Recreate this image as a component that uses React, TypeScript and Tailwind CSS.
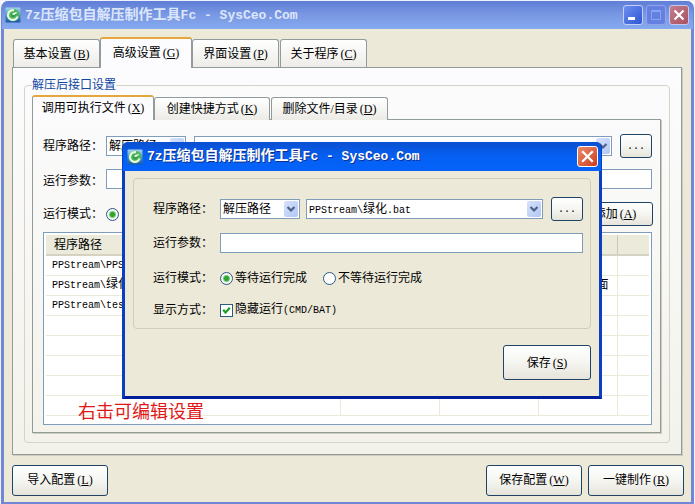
import type { ReactNode } from "react";
import clsx from "clsx";

const files = [
  { name: "PPStream\\PPStream", ext: ".exe", mode: "等待", display: "显示界面" },
  { name: "PPStream\\", cjk: "绿化", ext: ".bat", mode: "等待", display: "不显示界面" },
  { name: "PPStream\\test", ext: ".exe", mode: "等待", display: "显示界面" },
];
const emptyRows = [0, 1, 2, 3, 4];

function Hotkey({ children }: { children: string }) {
  return (
    <span className="ml-0.5">
      (<u>{children}</u>)
    </span>
  );
}

function Mono({ children }: { children: ReactNode }) {
  return <span className="font-['Liberation_Mono','Noto_Sans_CJK_SC',monospace] text-[10px]">{children}</span>;
}

function AppLogo() {
  return (
    <svg viewBox="0 0 16 16" className="h-4 w-4 shrink-0" aria-hidden="true">
      <defs>
        <linearGradient id="logoBg" x1="0" y1="0" x2="0" y2="1">
          <stop offset="0" stopColor="#a4d2ee" />
          <stop offset="0.5" stopColor="#4b9fc0" />
          <stop offset="1" stopColor="#1a56a4" />
        </linearGradient>
      </defs>
      <rect x="0.5" y="0.5" width="15" height="15" rx="1" fill="url(#logoBg)" />
      <circle cx="8" cy="8" r="6.300" fill="#4db55a" />
      <path d="M12.600 9.500A4.900 4.900 0 1 1 9 3.200" fill="none" stroke="#e8f8e2" strokeWidth="2.200" />
      <path d="M6 9C6 6 8.500 4.800 12 5.500C11 6.500 11 9.800 8 10.500Z" fill="#2f9d4a" />
      <path d="M7 7.500C8 5.500 10 5 12.500 5.500C11 6.300 10.500 7.500 9 8Z" fill="#f2fbe9" />
    </svg>
  );
}

function TitleText() {
  return (
    <h1 className="whitespace-pre font-['Liberation_Mono','Noto_Sans_CJK_SC',monospace] text-[13px] leading-5 font-bold">
      7z<span className="text-[14px]">压缩包自解压制作工具</span>Fc - SysCeo.Com
    </h1>
  );
}

function Tab({ label, hotkey, active, className }: { label: string; hotkey: string; active?: boolean; className: string }) {
  return (
    <button
      type="button"
      role="tab"
      aria-selected={!!active}
      className={clsx(
        "whitespace-nowrap rounded-t-[3px] border border-b-0 border-[#919b9c]",
        active
          ? "relative border-t-2 border-t-[#e5a63c] bg-[#fcfcfe] pb-0.5"
          : "bg-linear-to-b from-white to-[#ecebe6]",
        className,
      )}
    >
      {label}
      <Hotkey>{hotkey}</Hotkey>
    </button>
  );
}

function PushButton({ children, className, label }: { children: ReactNode; className: string; label?: string }) {
  return (
    <button
      type="button"
      aria-label={label}
      className={clsx(
        "shrink-0 whitespace-nowrap rounded-[3px] border border-[#1f4468] bg-linear-to-b from-white via-[#f5f5f1] to-[#e6e4da]",
        className,
      )}
    >
      {children}
    </button>
  );
}

function Select({ id, label, children, className }: { id: string; label?: string; children?: ReactNode; className: string }) {
  return (
    <div className={clsx("relative h-5", className)}>
      <select
        id={id}
        aria-label={label}
        className="block h-5 w-full appearance-none border border-[#7f9db9] bg-white pr-5 pl-0.5 leading-4"
      >
        {children}
      </select>
      <span className="pointer-events-none absolute top-0.5 right-0.5 flex h-4 w-3.5 items-center justify-center rounded-[2px] bg-linear-to-br from-[#d6e2fd] to-[#b3c7f3]">
        <svg viewBox="0 0 10 8" className="h-2 w-2.5" aria-hidden="true">
          <path d="M1.500 2L5 5.500L8.500 2" fill="none" stroke="#4d6185" strokeWidth="2.200" />
        </svg>
      </span>
    </div>
  );
}

function Radio({ name, label, checked, hideLabel }: { name: string; label: string; checked?: boolean; hideLabel?: boolean }) {
  return (
    <label className="flex items-center gap-0.5 whitespace-nowrap">
      <input
        type="radio"
        name={name}
        aria-label={label}
        defaultChecked={checked}
        className="h-[13px] w-[13px] appearance-none rounded-full border border-[#2a5a86] bg-white checked:bg-[radial-gradient(circle,#2ba52b_0_2px,#7ccb7c_3px,#f6f6f2_4px)]"
      />
      {!hideLabel && label}
    </label>
  );
}

function MainWindow() {
  return (
    <div className="flex flex-1 flex-col rounded-t-[7px] border-x-[3px] border-b-2 border-[#7286d6] bg-[#ece9d8]">
      <header className="-mx-0.5 flex h-7 items-center gap-1 rounded-t-[6px] bg-linear-to-b from-[#5f7ed6] via-[#7a98e3] to-[#85aaf0] pr-1 pl-[3px] text-[#dce6fa]">
        <AppLogo />
        <TitleText />
        <div className="ml-auto flex gap-[3px]">
          <button type="button" aria-label="最小化" className="h-5 w-5 rounded-[3px] border border-[#c3d0f5] bg-linear-to-br from-[#6d8ff0] to-[#2f55d4]">
            <svg viewBox="0 0 18 18" aria-hidden="true"><path d="M4 12.500h7" stroke="#fff" strokeWidth="3" /></svg>
          </button>
          <button type="button" aria-label="最大化" className="h-5 w-5 rounded-[3px] border border-[#91a5ec] bg-[#6481e2]">
            <svg viewBox="0 0 18 18" fill="none" aria-hidden="true"><path d="M4.500 4.500h9v9h-9zM4 5.500h10" stroke="#8ba3f0" /></svg>
          </button>
          <button type="button" aria-label="关闭" className="h-5 w-5 rounded-[3px] border border-[#c9c8e8] bg-linear-to-br from-[#c27f90] to-[#a8505f]">
            <svg viewBox="0 0 18 18" aria-hidden="true"><path d="M4.500 4.500l9 9M13.500 4.500l-9 9" stroke="#fff" strokeWidth="2.200" /></svg>
          </button>
        </div>
      </header>

      <main className="flex flex-1 flex-col pt-2 pr-[7px] pb-1.5 pl-2">
        <div role="tablist" className="-mb-px flex items-end px-px">
          <Tab label="基本设置" hotkey="B" className="h-[29px] w-[87px]" />
          <Tab label="高级设置" hotkey="G" active className="h-[31px] w-[92px]" />
          <Tab label="界面设置" hotkey="P" className="h-[29px] w-[87px]" />
          <Tab label="关于程序" hotkey="C" className="ml-px h-[29px] w-[87px]" />
        </div>
        <section className="mr-0.5 flex flex-1 flex-col border border-[#919b9c] bg-linear-to-b from-[#fcfcfe] to-[#f3f2ea] px-[11px] pt-[9px] pb-[11px] shadow-[1px_1px_0_#cfccbd]">
          <fieldset className="min-w-0 rounded-[4px] border border-[#d5d3c6] pr-1.5 pb-[9px] pl-[7px]">
            <legend className="leading-4 text-[#0e46a3]">解压后接口设置</legend>
            <div role="tablist" className="-mb-px flex items-end pt-0.5">
              <Tab label="调用可执行文件" hotkey="X" active className="h-[25px] w-[122px]" />
              <Tab label="创建快捷方式" hotkey="K" className="h-[23px] w-[116px]" />
              <Tab label="删除文件/目录" hotkey="D" className="ml-px h-[23px] w-[117px]" />
            </div>
            <div className="mr-0.5 border border-[#919b9c] pt-3.5 pr-2 pb-[7px] pl-2.5 shadow-[1px_1px_0_#cfccbd]">
              <div className="flex h-6 items-center">
                <label htmlFor="base" className="w-[63px] shrink-0">程序路径：</label>
                <Select id="base" className="w-20 shrink-0">
                  <option>解压路径</option>
                </Select>
                <Select id="file" label="文件" className="mx-2 flex-1" />
                <PushButton label="浏览" className="h-6 w-8"><Mono>...</Mono></PushButton>
              </div>
              <div className="mt-[11px] flex h-5 items-center">
                <label htmlFor="args" className="w-[63px] shrink-0 pt-1">运行参数：</label>
                <input id="args" className="h-5 min-w-0 flex-1 border border-[#7f9db9] bg-white px-1" />
              </div>
              <div className="mt-[13px] -mr-px flex h-6 items-center">
                <span className="w-[63px] shrink-0">运行模式：</span>
                <Radio name="mode" label="等待运行完成" checked hideLabel />
                <PushButton className="ml-auto h-6 w-[76px]">添加<Hotkey>A</Hotkey></PushButton>
              </div>
              <div className="relative mt-1.5 border border-[#7f9db9] bg-white p-0.5 pb-2">
                <table className="w-full table-fixed border-collapse text-left">
                  <colgroup>
                    <col />
                    <col className="w-[99px]" />
                    <col className="w-[99px]" />
                    <col className="w-[79px]" />
                    <col className="w-[32px]" />
                  </colgroup>
                  <thead>
                    <tr className="h-5 border-b-2 border-[#d6d2c2] bg-[#ebeadb]">
                      <th className="border-r border-[#cbc8b9] pl-2 font-normal">程序路径</th>
                      <th className="border-r border-[#cbc8b9] pl-2 font-normal">运行参数</th>
                      <th className="border-r border-[#cbc8b9] pl-2 font-normal">运行模式</th>
                      <th className="border-r border-[#cbc8b9] pl-2 font-normal">显示方式</th>
                      <th />
                    </tr>
                  </thead>
                  <tbody>
                    {files.map((file) => (
                      <tr key={file.name} className="h-5 border-b border-[#ece9d8]">
                        <td className="border-r border-[#ece9d8] pl-1.5">
                          <Mono>{file.name}</Mono>{file.cjk}<Mono>{file.ext}</Mono>
                        </td>
                        <td className="border-r border-[#ece9d8]" />
                        <td className="border-r border-[#ece9d8] pl-1.5">{file.mode}</td>
                        <td className="border-r border-[#ece9d8] pl-2.5">{file.display}</td>
                        <td />
                      </tr>
                    ))}
                    {emptyRows.map((row) => (
                      <tr key={row} className="h-5 border-b border-[#ece9d8]">
                        <td className="border-r border-[#ece9d8]" />
                        <td className="border-r border-[#ece9d8]" />
                        <td className="border-r border-[#ece9d8]" />
                        <td className="border-r border-[#ece9d8]" />
                        <td />
                      </tr>
                    ))}
                  </tbody>
                </table>
                <p className="absolute bottom-0 left-[34px] text-[18px] leading-6 text-[#e01818]">右击可编辑设置</p>
              </div>
            </div>
          </fieldset>
        </section>
        <footer className="mt-2.5 flex gap-1.5">
          <PushButton className="h-[31px] w-24">导入配置<Hotkey>L</Hotkey></PushButton>
          <PushButton className="ml-auto h-[31px] w-24">保存配置<Hotkey>W</Hotkey></PushButton>
          <PushButton className="h-[31px] w-24">一键制作<Hotkey>R</Hotkey></PushButton>
        </footer>
      </main>
    </div>
  );
}

function EditDialog() {
  return (
    <div
      role="dialog"
      aria-label="编辑设置"
      className="absolute top-[141px] left-[121px] w-[480px] rounded-t-[6px] border-x-[3px] border-b-[3px] border-[#0a3fc4] border-b-[#001d9a] bg-[#ece9d8]"
    >
      <header className="-mx-0.5 flex h-[29px] items-center gap-1 rounded-t-[5px] bg-linear-to-b from-[#0a4fd0] via-[#0560f2] to-[#0563fb] pr-[3px] pl-1 text-white [text-shadow:1px_1px_#0f2f8c]">
        <AppLogo />
        <TitleText />
        <button type="button" aria-label="关闭" className="ml-auto h-[21px] w-[21px] rounded-[3px] border border-white bg-linear-to-br from-[#ea8a6c] to-[#cc3a18]">
          <svg viewBox="0 0 18 18" aria-hidden="true"><path d="M4 4l10 10M14 4l-10 10" stroke="#fff" strokeWidth="2.200" /></svg>
        </button>
      </header>
      <form className="flex flex-col px-2 pt-[7px] pb-4">
        <div className="rounded-[4px] border border-[#d0cdbc] pt-[18px] pr-[7px] pb-[9px] pl-[19px]">
          <div className="flex h-6 items-center">
            <label htmlFor="editBase" className="w-[67px] shrink-0">程序路径：</label>
            <Select id="editBase" className="w-20 shrink-0">
              <option>解压路径</option>
            </Select>
            <div className="relative mr-2 ml-1.5 h-5 flex-1">
              <Select id="editFile" label="文件" className="w-full" />
              <span className="pointer-events-none absolute top-0.5 left-[3px] leading-4">
                <Mono>PPStream\</Mono>绿化<Mono>.bat</Mono>
              </span>
            </div>
            <PushButton label="浏览" className="h-6 w-8"><Mono>...</Mono></PushButton>
          </div>
          <div className="mt-3 flex h-5 items-center">
            <label htmlFor="editArgs" className="w-[67px] shrink-0">运行参数：</label>
            <input id="editArgs" className="h-5 min-w-0 flex-1 border border-[#7f9db9] bg-white px-1" />
          </div>
          <div className="mt-4 flex h-[18px] items-center">
            <span className="w-[67px] shrink-0">运行模式：</span>
            <Radio name="editMode" label="等待运行完成" checked />
            <div className="ml-4">
              <Radio name="editMode" label="不等待运行完成" />
            </div>
          </div>
          <div className="mt-3.5 flex h-[18px] items-center">
            <span className="w-[67px] shrink-0">显示方式：</span>
            <label className="flex items-center gap-0.5 whitespace-nowrap">
              <span className="grid">
                <input
                  type="checkbox"
                  defaultChecked
                  className="peer col-start-1 row-start-1 h-[13px] w-[13px] appearance-none border border-[#2a5a86] bg-white"
                />
                <svg viewBox="0 0 13 13" className="pointer-events-none invisible col-start-1 row-start-1 h-[13px] w-[13px] peer-checked:visible" aria-hidden="true">
                  <path d="M3.200 5.800L5.500 8.500L9.800 3.800" fill="none" stroke="#21a121" strokeWidth="2.200" />
                </svg>
              </span>
              <span>隐藏运行<Mono>(CMD/BAT)</Mono></span>
            </label>
          </div>
        </div>
        <PushButton className="mt-4 h-[35px] w-[88px] self-end">保存<Hotkey>S</Hotkey></PushButton>
      </form>
    </div>
  );
}

export default function App() {
  return (
    <div className="relative flex min-h-screen flex-col border border-[#eef1fb] bg-white font-['Liberation_Serif','Noto_Sans_CJK_SC',sans-serif] text-[12px] leading-4 text-black">
      <MainWindow />
      <EditDialog />
    </div>
  );
}
